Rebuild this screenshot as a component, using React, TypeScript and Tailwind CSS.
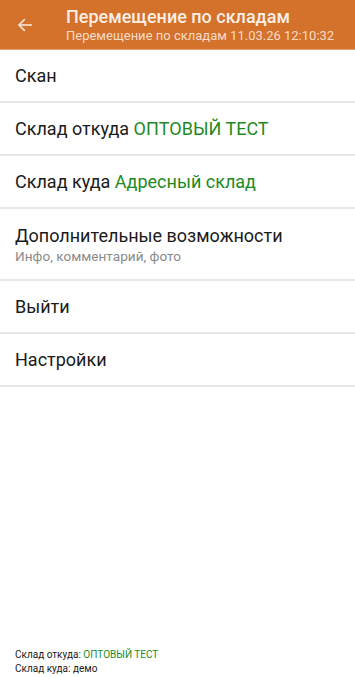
import React from "react";

const font = { fontFamily: "Roboto, 'Noto Sans', sans-serif" };

function Row({ children, tall }: { children: React.ReactNode; tall?: boolean }) {
  return (
    <div className={`flex flex-col justify-center px-[15px] border-b-2 border-[#e6e6e6] ${tall ? "h-[72px]" : "h-[53px]"}`}>
      {children}
    </div>
  );
}

export default function App() {
  return (
    <div className="w-[355px] h-[677px] bg-white flex flex-col relative" style={font}>
      <div className="h-[50px] bg-[#d4712b] flex items-center shrink-0 border-b border-[#e8a070]">
        <div className="w-[66px] flex items-center justify-center pr-[16px]">
          <svg width="18" height="18" viewBox="0 0 24 24" fill="none" stroke="#f7e4d6" strokeWidth="2.2" strokeLinecap="square">
            <path d="M20 12H5" />
            <path d="M11 5l-7 7 7 7" />
          </svg>
        </div>
        <div className="flex flex-col leading-none">
          <div className="text-[18px] font-medium text-[#fbeee4] leading-[22px]">Перемещение по складам</div>
          <div className="text-[13px] text-[#f6dcc8] leading-[16px]">Перемещение по складам 11.03.26 12:10:32</div>
        </div>
      </div>
      <Row>
        <div className="text-[18px] text-[#1a1a1a]">Скан</div>
      </Row>
      <Row>
        <div className="text-[18px] text-[#1a1a1a]">
          Склад откуда <span className="text-[#1e8a1e]">ОПТОВЫЙ ТЕСТ</span>
        </div>
      </Row>
      <Row>
        <div className="text-[18px] text-[#1a1a1a]">
          Склад куда <span className="text-[#1e8a1e]">Адресный склад</span>
        </div>
      </Row>
      <Row tall>
        <div className="text-[18px] text-[#1a1a1a] leading-[23px]">Дополнительные возможности</div>
        <div className="text-[13.6px] text-[#8a8a8a] leading-[18px]">Инфо, комментарий, фото</div>
      </Row>
      <Row>
        <div className="text-[18px] text-[#1a1a1a]">Выйти</div>
      </Row>
      <Row>
        <div className="text-[18px] text-[#1a1a1a]">Настройки</div>
      </Row>
      <div className="flex-1" />
      <div className="px-[15px] pb-[1px] text-[10px] leading-[14px] text-[#1a1a1a]">
        <div>
          Склад откуда: <span className="text-[#1e8a1e]">ОПТОВЫЙ ТЕСТ</span>
        </div>
        <div>Склад куда: демо</div>
      </div>
    </div>
  );
}
